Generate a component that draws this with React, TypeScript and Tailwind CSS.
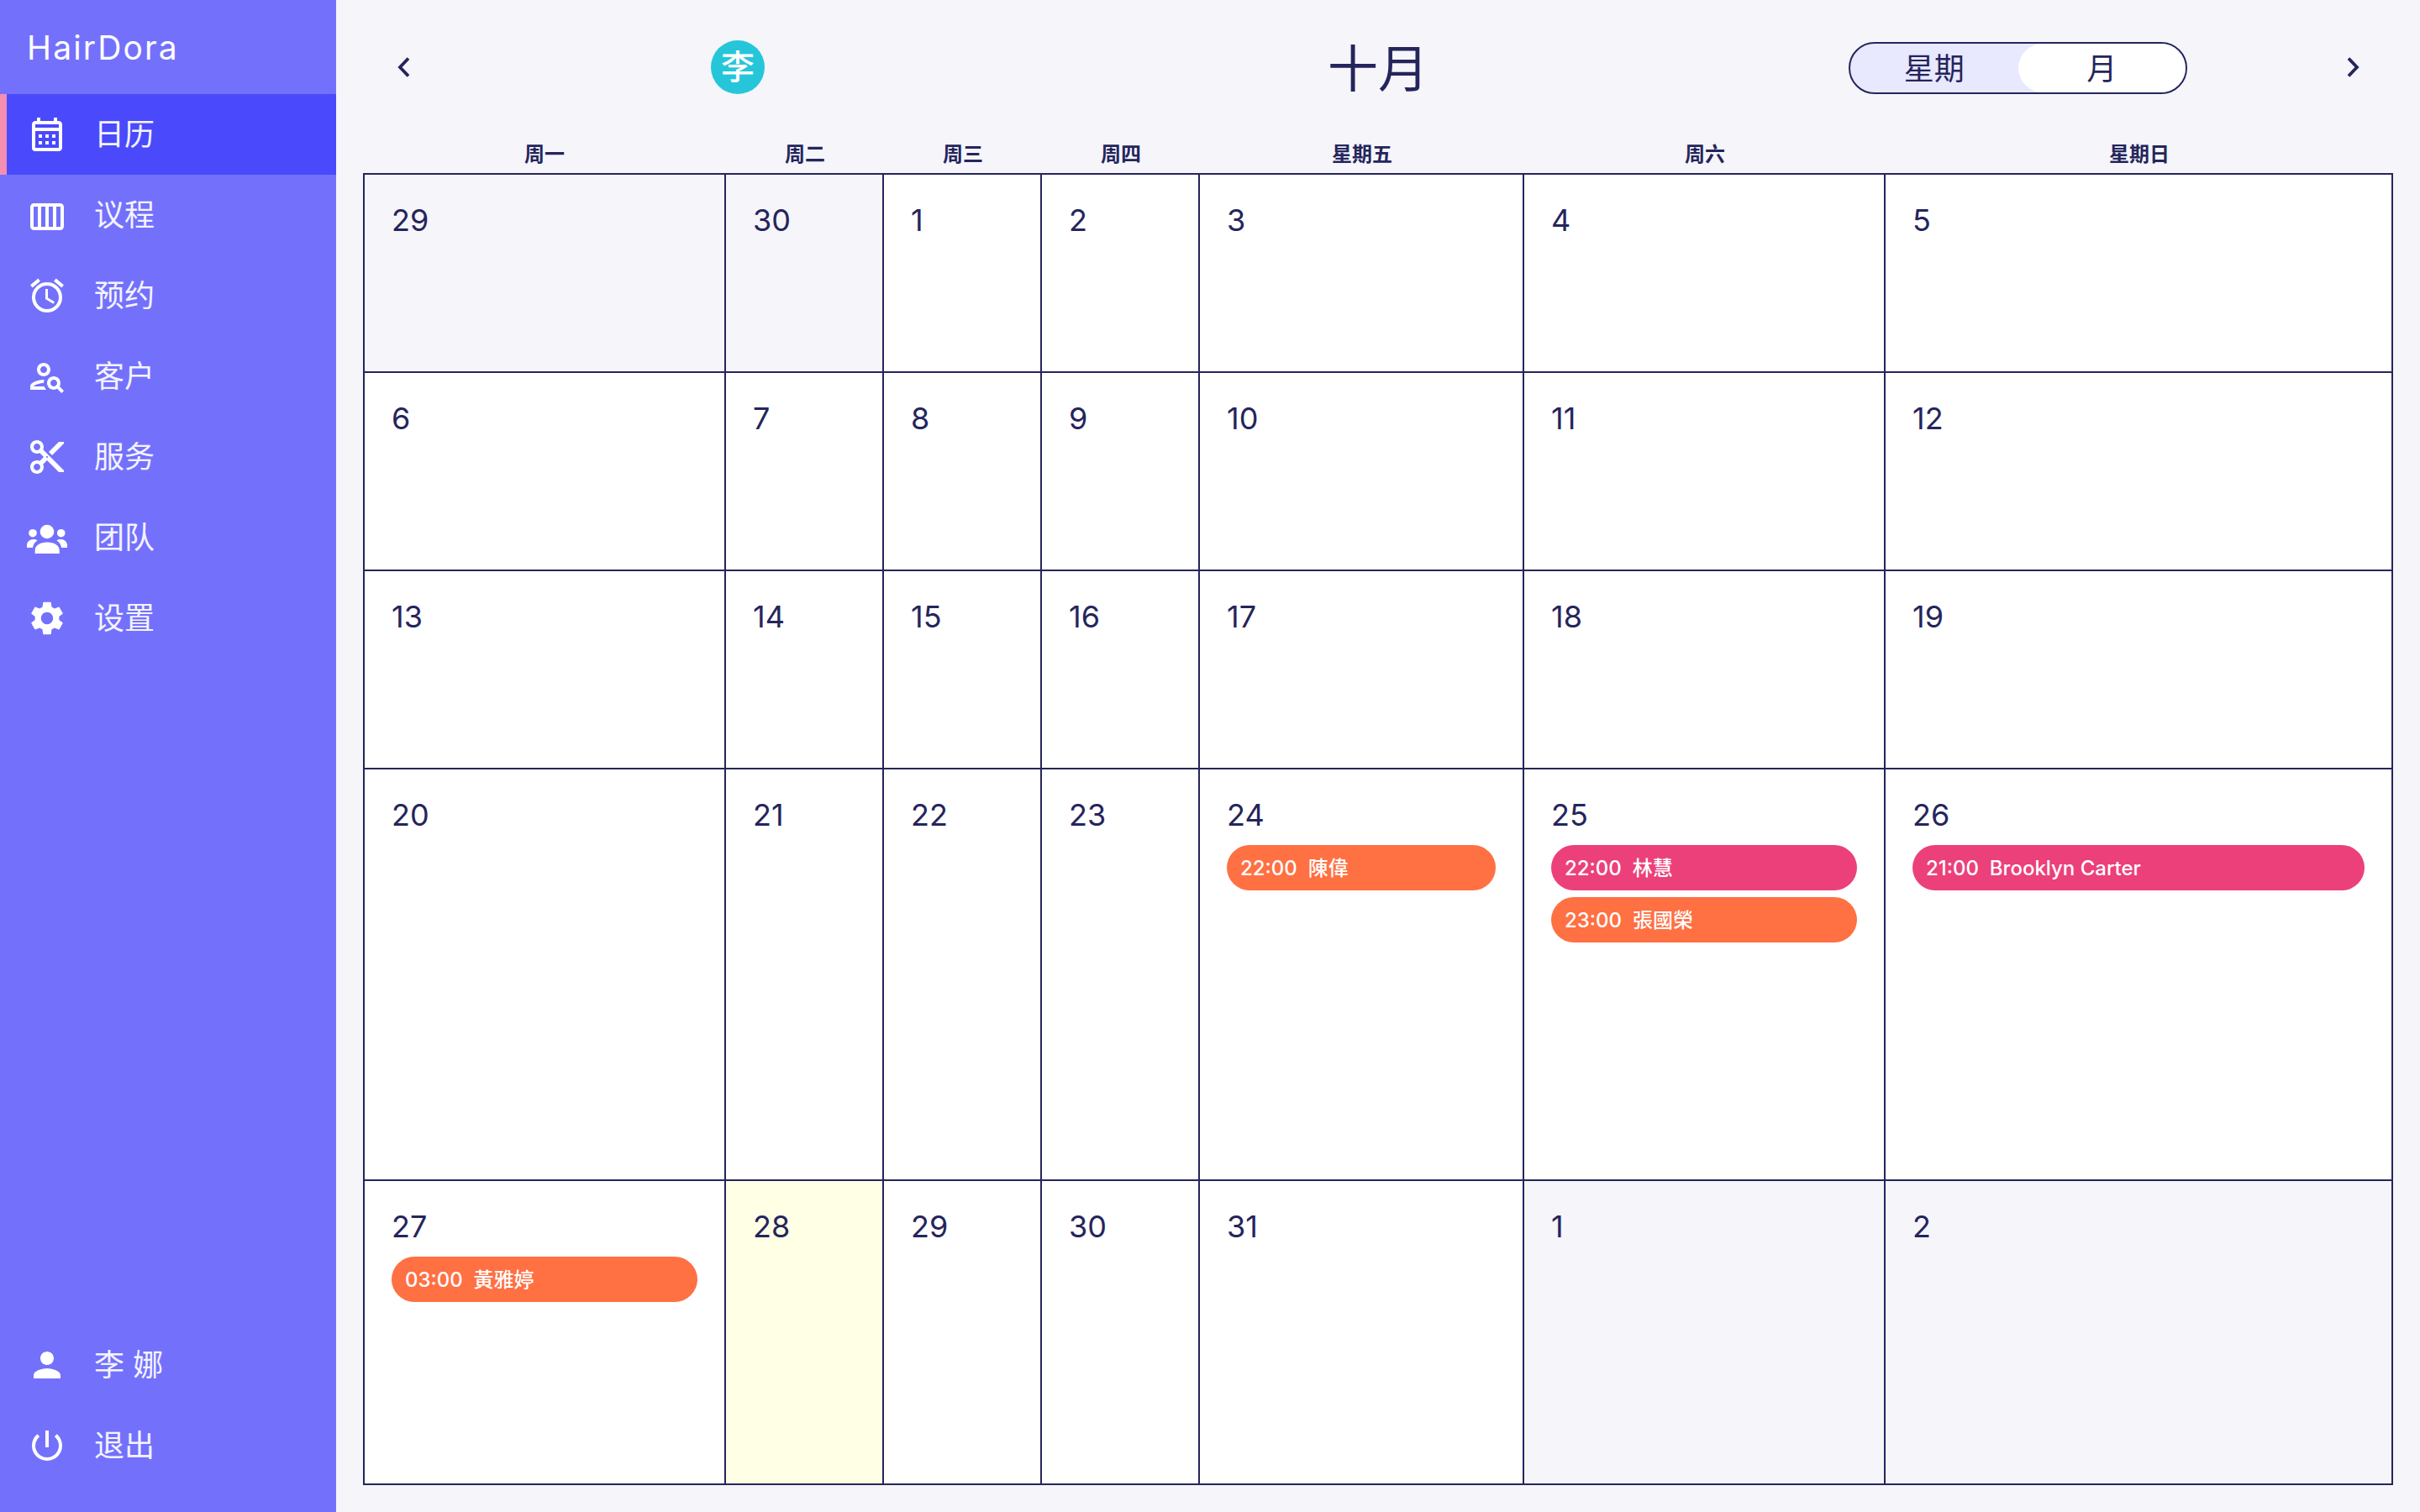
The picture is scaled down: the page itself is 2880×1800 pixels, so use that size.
import React from "react";
import {
  MdOutlineCalendarMonth, MdOutlineAlarm, MdOutlinePersonSearch, MdOutlineContentCut,
  MdSettings, MdPerson, MdOutlinePowerSettingsNew,
} from "react-icons/md";

const FONT = "font-['Inter','Noto_Sans_CJK_SC',sans-serif]";

function ColumnsIcon() {
  return (
    <svg viewBox="0 0 48 48" className="w-12 h-12" fill="none" stroke="currentColor">
      <rect x="6" y="12" width="36" height="28" rx="2.5" strokeWidth="4" />
      <path d="M15 12v28M24 12v28M33 12v28" strokeWidth="4" />
    </svg>
  );
}

function TeamIcon() {
  return (
    <svg viewBox="0 0 48 48" className="w-12 h-12" fill="currentColor">
      <circle cx="24" cy="17" r="8.3" />
      <circle cx="7" cy="18.7" r="4.8" />
      <circle cx="40.7" cy="18.7" r="4.8" />
      <path d="M9.7 43v-4c0-5.500 6-9.500 14.500-9.500S38.700 33.500 38.700 39v4c0 .6-.4 0-1 0H10.700c-.6 0-1 .6-1 0z" />
      <path d="M0 36v-3c0-4 3.500-7 7.500-7 2 0 3.600.500 5 1.400C9.500 29 7.500 32 7 36H0z" />
      <path d="M48 36v-3c0-4-3.500-7-7.500-7-2 0-3.600.500-5 1.400C38.500 29 40.500 32 41 36h7z" />
    </svg>
  );
}

function Chevron({ dir }: { dir: "left" | "right" }) {
  return (
    <svg viewBox="0 0 16 24" className="w-4 h-6" fill="none" stroke="#25255c" strokeWidth="3.800">
      <path d={dir === "left" ? "M14 1.500 L4 12 L14 22.500" : "M2 1.500 L12 12 L2 22.500"} />
    </svg>
  );
}

function NavItem({ icon, label, active }: { icon: React.ReactNode; label: string; active?: boolean }) {
  return (
    <div className={`h-24 flex items-center gap-8 text-white ${active ? "bg-[#4a4afc] border-l-8 border-[#f48fb1] pl-6" : "pl-8"}`}>
      <div className="w-12 h-12 flex items-center justify-center text-[50px]">{icon}</div>
      <span className="text-[36px] leading-[44px] text-[#f3f3ff]">{label}</span>
    </div>
  );
}

type Ev = { t: string; n: string; c: string };
type Cell = { d: number; bg?: string; ev?: Ev[] };

const O = "bg-[#ff7043]";
const P = "bg-[#ec407a]";
const GREY = "bg-[#f5f5fa]";

const cells: Cell[] = [
  { d: 29, bg: GREY }, { d: 30, bg: GREY }, { d: 1 }, { d: 2 }, { d: 3 }, { d: 4 }, { d: 5 },
  { d: 6 }, { d: 7 }, { d: 8 }, { d: 9 }, { d: 10 }, { d: 11 }, { d: 12 },
  { d: 13 }, { d: 14 }, { d: 15 }, { d: 16 }, { d: 17 }, { d: 18 }, { d: 19 },
  { d: 20 }, { d: 21 }, { d: 22 }, { d: 23 },
  { d: 24, ev: [{ t: "22:00", n: "陳偉", c: O }] },
  { d: 25, ev: [{ t: "22:00", n: "林慧", c: P }, { t: "23:00", n: "張國榮", c: O }] },
  { d: 26, ev: [{ t: "21:00", n: "Brooklyn Carter", c: P }] },
  { d: 27, ev: [{ t: "03:00", n: "黃雅婷", c: O }] },
  { d: 28, bg: "bg-[#ffffe6]" }, { d: 29 }, { d: 30 }, { d: 31 }, { d: 1, bg: GREY }, { d: 2, bg: GREY },
];

const heads = ["周一", "周二", "周三", "周四", "星期五", "周六", "星期日"];

export default function App() {
  return (
    <div className={`${FONT} w-[2880px] h-[1800px] flex bg-[#f5f5fa] text-[#25255c] overflow-hidden`}>
      <aside className="w-[400px] h-full bg-[#7371fc] flex flex-col shrink-0">
        <div className="h-28 flex items-center pl-8 text-white text-[39px] tracking-[0.055em] leading-none">HairDora</div>
        <NavItem active icon={<MdOutlineCalendarMonth />} label="日历" />
        <NavItem icon={<ColumnsIcon />} label="议程" />
        <NavItem icon={<MdOutlineAlarm />} label="预约" />
        <NavItem icon={<MdOutlinePersonSearch />} label="客户" />
        <NavItem icon={<MdOutlineContentCut />} label="服务" />
        <NavItem icon={<TeamIcon />} label="团队" />
        <NavItem icon={<MdSettings />} label="设置" />
        <div className="mt-auto mb-[31px]">
          <NavItem icon={<MdPerson />} label="李 娜" />
          <NavItem icon={<MdOutlinePowerSettingsNew />} label="退出" />
        </div>
      </aside>

      <main className="flex-1 pl-8 pr-8 flex flex-col">
        <div className="h-[160px] flex items-center shrink-0">
          <div className="ml-10"><Chevron dir="left" /></div>
          <div className="ml-[358px] w-16 h-16 rounded-full bg-[#26c6da] flex items-center justify-center text-white text-[40px] font-medium leading-none">李</div>
          <div className="ml-[670px] mt-[4px] text-[60px] leading-[76px] w-[120px] whitespace-nowrap">十月</div>
          <div className="ml-[500px] mt-[2px] w-[403px] h-[62px] rounded-full border-2 border-[#25255c] bg-[#e8e8ff] flex text-[36px] leading-none overflow-hidden">
            <div className="flex-1 flex items-center justify-center pt-[2px]">星期</div>
            <div className="flex-1 flex items-center justify-center pt-[2px] bg-white rounded-full">月</div>
          </div>
          <div className="ml-[190px]"><Chevron dir="right" /></div>
        </div>

        <div className="grid grid-cols-[432px_188px_188px_188px_386px_430px_604px] h-[46px] pt-[2px] shrink-0 items-center text-[24px] font-bold leading-none">
          {heads.map((h) => (
            <div key={h} className="text-center">{h}</div>
          ))}
        </div>

        <div className="grid grid-cols-[432px_188px_188px_188px_386px_430px_604px] grid-rows-[236px_236px_236px_490px_362px] w-[2416px] border-t-2 border-[#25255c] shrink-0">
          {cells.map((c, i) => (
            <div
              key={i}
              className={`border-r-2 border-b-2 border-[#25255c] ${i % 7 === 0 ? "border-l-2" : ""} ${c.bg ?? "bg-white"} pt-[32px] px-[32px]`}
            >
              <div className="text-[36px] leading-[44px] mb-[14px]">{c.d}</div>
              <div className="flex flex-col gap-2">
                {c.ev?.map((e) => (
                  <div key={e.t} className={`${e.c} h-[54px] rounded-full pl-4 pt-[2px] flex items-center text-white text-[24px] font-medium leading-none whitespace-pre`}>
                    {e.t}  {e.n}
                  </div>
                ))}
              </div>
            </div>
          ))}
        </div>
      </main>
    </div>
  );
}
